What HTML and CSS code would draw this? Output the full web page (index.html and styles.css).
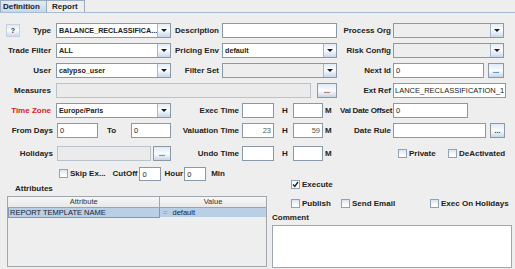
FILE: index.html
```html
<!DOCTYPE html>
<html lang="en">
<head>
  <meta charset="UTF-8" />
  <title>Scheduled Task Definition</title>
  <meta name="viewport" content="width=device-width, initial-scale=1.0" />
  <link rel="stylesheet" href="styles.css">
</head>
<body>

<div class="tabs">
  <div class="tab active">Definition</div>
  <div class="tab">Report</div>
</div>

<div class="form">
  <div class="row">
    <div class="lab c1"><span class="help">?</span><span>Type</span></div>
    <div class="combo w115"><span class="val">BALANCE_RECLASSIFICA...</span><span class="arrow"></span></div>
    <div class="lab c2">Description</div>
    <div class="field w115"></div>
    <div class="lab c3">Process Org</div>
    <div class="combo empty w111"><span class="val"></span><span class="arrow"></span></div>
  </div>

  <div class="row">
    <div class="lab c1">Trade Filter</div>
    <div class="combo w115"><span class="val">ALL</span><span class="arrow"></span></div>
    <div class="lab c2">Pricing Env</div>
    <div class="combo w115"><span class="val">default</span><span class="arrow"></span></div>
    <div class="lab c3">Risk Config</div>
    <div class="combo empty w111"><span class="val"></span><span class="arrow"></span></div>
  </div>

  <div class="row">
    <div class="lab c1">User</div>
    <div class="combo w115"><span class="val">calypso_user</span><span class="arrow"></span></div>
    <div class="lab c2">Filter Set</div>
    <div class="combo empty w115"><span class="val"></span><span class="arrow"></span></div>
    <div class="lab c3">Next Id</div>
    <div class="field w91">0</div>
    <div class="btn b16">...</div>
  </div>

  <div class="row">
    <div class="lab c1">Measures</div>
    <div class="field off w255"></div>
    <div class="btn b20 gap6">...</div>
    <div class="lab c3">Ext Ref</div>
    <div class="field w113">LANCE_RECLASSIFICATION_1</div>
  </div>

  <div class="row">
    <div class="lab c1 red">Time Zone</div>
    <div class="combo w115"><span class="val">Europe/Paris</span><span class="arrow"></span></div>
    <div class="lab ct">Exec Time</div>
    <div class="field w32"></div>
    <div class="unit uh">H</div>
    <div class="field w30"></div>
    <div class="unit um">M</div>
    <div class="lab c3 tight">Val Date Offset</div>
    <div class="field w75">0</div>
  </div>

  <div class="row">
    <div class="lab cs">From Days</div>
    <div class="field w41">0</div>
    <div class="lab to">To</div>
    <div class="field w40">0</div>
    <div class="lab ct">Valuation Time</div>
    <div class="field num w32">23</div>
    <div class="unit uh">H</div>
    <div class="field num w30">59</div>
    <div class="unit um">M</div>
    <div class="lab c3">Date Rule</div>
    <div class="field w93"></div>
    <div class="btn b15">...</div>
  </div>

  <div class="row spaced">
    <div class="lab cs">Holidays</div>
    <div class="field off w94"></div>
    <div class="btn b18 gap2">...</div>
    <div class="lab ct">Undo Time</div>
    <div class="field w32"></div>
    <div class="unit uh">H</div>
    <div class="field w30"></div>
    <div class="unit um">M</div>
    <div class="checks-right">
      <label class="check w50"><span class="box"></span>Private</label>
      <label class="check"><span class="box"></span>DeActivated</label>
    </div>
  </div>
</div>

<div class="lower">
  <div class="lower-left">
    <div class="skip-row">
      <label class="check"><span class="box"></span>Skip Ex...</label>
      <span class="lab small cut">CutOff</span>
      <div class="field w22">0</div>
      <span class="lab small hour">Hour</span>
      <div class="field w22">0</div>
      <span class="lab small min">Min</span>
    </div>
    <div class="title">Attributes</div>
    <div class="attr-table">
      <table>
        <colgroup><col class="col-a"><col></colgroup>
        <tr><th>Attribute</th><th>Value</th></tr>
        <tr class="sel"><td class="focus">REPORT TEMPLATE NAME</td><td><span class="eq">=</span> default</td></tr>
      </table>
    </div>
  </div>

  <div class="lower-right">
    <div class="check-row first">
      <label class="check"><span class="box on"><svg width="7" height="7" viewBox="0 0 7 7"><path d="M1 3.5 L2.8 5.5 L6 1" fill="none" stroke="#222" stroke-width="1.4"/></svg></span>Execute</label>
    </div>
    <div class="check-row">
      <label class="check w50"><span class="box"></span>Publish</label>
      <label class="check w89"><span class="box"></span>Send Email</label>
      <label class="check"><span class="box"></span>Exec On Holidays</label>
    </div>
    <div class="title comment">Comment</div>
    <div class="textarea"></div>
  </div>
</div>

</body>
</html>
```

FILE: styles.css
```css
* { box-sizing: border-box; margin: 0; padding: 0; }
body {
  width: 515px;
  height: 269px;
  overflow: hidden;
  background: #eeeeee;
  font-family: "Liberation Sans", Arial, sans-serif;
  font-size: 8px;
  color: #222;
}

/* tabs */
.tabs {
  display: flex;
  height: 13px;
  border-bottom: 1px solid #a7bdd6;
}
.tab {
  width: 38px;
  padding-left: 5px;
  font-weight: bold;
  line-height: 11px;
  border: 1px solid #9aabbf;
  border-bottom: none;
  border-left: none;
}
.tab.active {
  width: 47px;
  padding-left: 2px;
  border-left: 1px solid #9aabbf;
  background: linear-gradient(#e2ecf7, #c4d8ed);
}

/* form rows */
.form {
  padding-top: 10px;
  display: flex;
  flex-direction: column;
  gap: 5px;
}
.row {
  display: flex;
  align-items: center;
  height: 15px;
}
.row.spaced { margin-top: 3px; }

.lab {
  display: flex;
  justify-content: flex-end;
  align-items: center;
  height: 15px;
  font-weight: bold;
  white-space: nowrap;
}
.c1 { width: 56px; padding-right: 5px; }
.c2 { width: 51px; padding-right: 3px; }
.c3 { width: 56px; padding-right: 2px; }
.c3.tight { padding-right: 1px; letter-spacing: -0.3px; }
.cs { width: 57px; padding-right: 4px; }
.ct { width: 71px; padding-right: 3px; }
.to { width: 33px; justify-content: flex-start; padding-left: 9px; }
.red { color: #e3161b; }

.help {
  margin-left: 6px;
  margin-right: auto;
  width: 14px;
  height: 13px;
  font-size: 7px;
  line-height: 12px;
  text-align: center;
  color: #334;
  border: 1px solid #c4d2e0;
  background: linear-gradient(#dfe9f4, #fbfcfe 50%, #c9d9ea);
}

/* inputs */
.field {
  height: 15px;
  border: 1px solid #8a99a8;
  background: #fff;
  padding-left: 2px;
  font-size: 7.5px;
  line-height: 13px;
  white-space: nowrap;
  overflow: hidden;
}
.field.off { background: #ebebeb; border-color: #b9c3cd; }
.field.num { text-align: right; padding-right: 2px; color: #555; }

.combo {
  display: flex;
  height: 15px;
  border: 1px solid #8a99a8;
  background: #fff;
}
.combo .val {
  flex: 1;
  padding-left: 2px;
  font-size: 7.2px;
  font-weight: bold;
  line-height: 13px;
  white-space: nowrap;
  overflow: hidden;
}
.combo.empty .val { background: #eeeeee; }
.combo .arrow {
  width: 13px;
  display: flex;
  align-items: center;
  justify-content: center;
  border-left: 1px solid #a9b7c5;
  background: linear-gradient(#e3ecf6, #fdfeff 45%, #c7d8ea);
}
.combo .arrow::after {
  content: "";
  border-left: 3px solid transparent;
  border-right: 3px solid transparent;
  border-top: 3px solid #1c1c1c;
}

.btn {
  height: 15px;
  display: flex;
  align-items: flex-end;
  justify-content: center;
  padding-bottom: 3px;
  font-size: 7px;
  font-weight: bold;
  line-height: 7px;
  color: #334;
  border: 1px solid #8a99a8;
  background: linear-gradient(#dfe9f4, #fbfcfe 50%, #c6d7e9);
}

.w22 { width: 22px; height: 14px; }
.w30 { width: 30px; }
.w32 { width: 32px; }
.w40 { width: 40px; }
.w41 { width: 41px; }
.w75 { width: 75px; }
.w91 { width: 91px; }
.w93 { width: 93px; }
.w94 { width: 94px; }
.w111 { width: 111px; }
.w113 { width: 113px; padding-left: 1px; }
.w115 { width: 115px; }
.w255 { width: 255px; }
.b15 { width: 15px; margin-left: 4px; }
.b16 { width: 16px; margin-left: 4px; }
.b18 { width: 18px; }
.b20 { width: 20px; }
.gap2 { margin-left: 2px; }
.gap6 { margin-left: 6px; }

.unit {
  height: 15px;
  line-height: 15px;
  font-weight: bold;
}
.uh { width: 19px; padding-left: 8px; }
.um { width: 14px; padding-left: 2px; }

/* checkboxes */
.check {
  display: flex;
  align-items: center;
  font-weight: bold;
  white-space: nowrap;
}
.check .box {
  width: 9px;
  height: 9px;
  margin-right: 2px;
  display: flex;
  align-items: center;
  justify-content: center;
  border: 1px solid #93a2b2;
  background: linear-gradient(#d7e4f1, #f7fafd 60%, #ffffff);
}
.check .box.on { background: #fbfcfe; }
.w50 { width: 50px; }
.w89 { width: 89px; }
.checks-right {
  display: flex;
  align-items: center;
  padding-left: 61px;
}

/* lower section */
.lower {
  display: flex;
  margin-top: 5px;
}
.lower-left { width: 270px; }
.lower-right { flex: 1; }

.skip-row {
  display: flex;
  align-items: center;
  height: 15px;
  padding-left: 59px;
}
.lab.small { height: 14px; }
.cut { margin-left: 7px; margin-right: 2px; }
.hour { margin-left: 3px; margin-right: 1px; }
.min { margin-left: 5px; }

.title {
  font-weight: bold;
  line-height: 10px;
  margin-top: 3px;
  padding-left: 15px;
}
.attr-table {
  margin: 2px 0 0 7px;
  width: 260px;
  height: 71px;
  border: 1px solid #9fa6ad;
  background: #eeeeee;
  overflow: hidden;
}
.attr-table table {
  width: 100%;
  border-collapse: collapse;
  table-layout: fixed;
  font-size: 7.5px;
}
.col-a { width: 151px; }
.attr-table th {
  height: 10px;
  font-weight: normal;
  color: #333;
  border-right: 1px solid #a3a3a3;
  border-bottom: 1px solid #a3a3a3;
  background: linear-gradient(#f7f7f7, #e8e8e8);
}
.attr-table th:last-child { border-right: none; }
.attr-table td {
  height: 10px;
  padding-left: 1px;
  white-space: nowrap;
  color: #1a2230;
  background: #b8cfe5;
}
.attr-table td.focus { border: 1px solid #7c98c2; }
.eq { color: #8090a0; margin: 0 3px 0 2px; }

.check-row {
  display: flex;
  align-items: center;
  height: 13px;
  margin-top: 6px;
  padding-left: 21px;
}
.check-row.first { margin-top: 12px; }
.title.comment { padding-left: 2px; }
.textarea {
  margin: 2px 0 0 2px;
  width: 240px;
  height: 43px;
  border: 1px solid #9fa6ad;
  background: #fff;
}
```
